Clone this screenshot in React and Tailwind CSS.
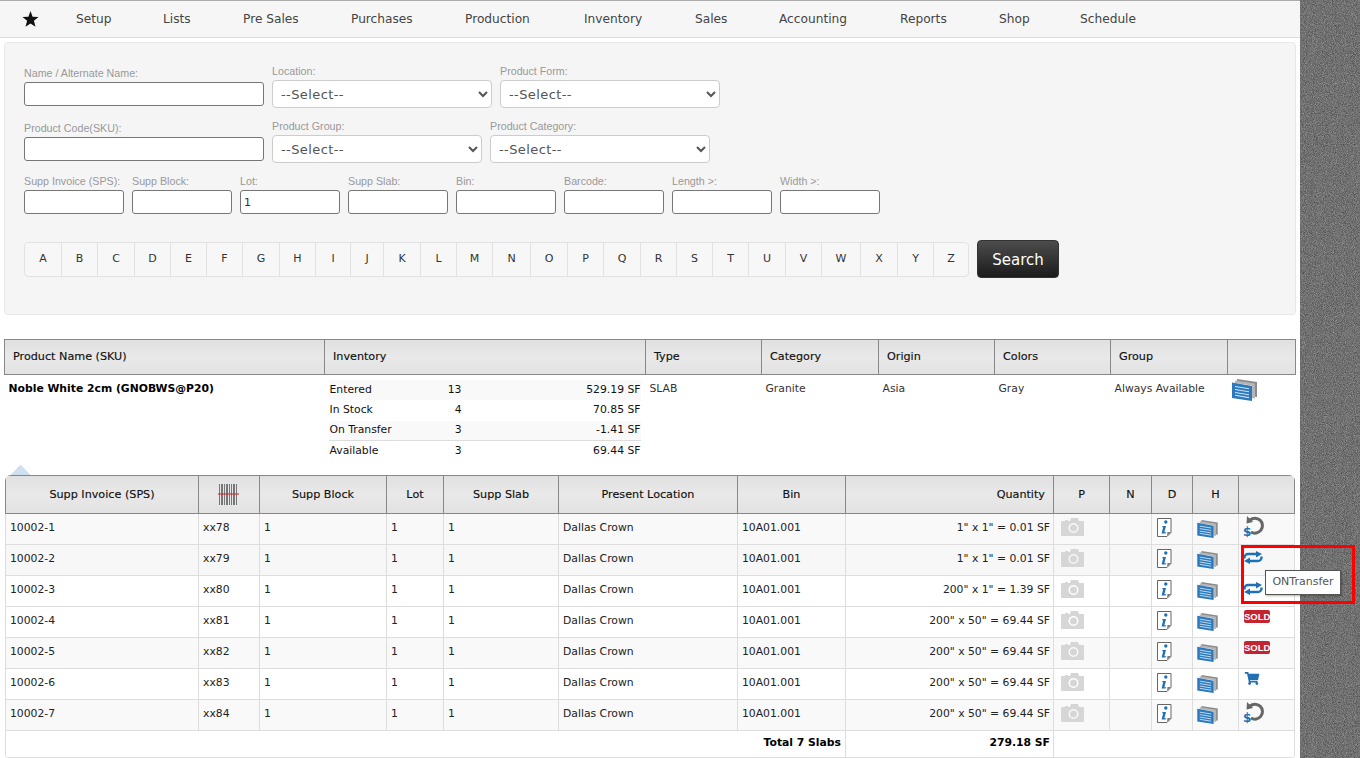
import React from "react";
import { FaShoppingCart } from "react-icons/fa";

const nav = [
  ["Setup", "w-[87px]"], ["Lists", "w-[80px]"], ["Pre Sales", "w-[108px]"], ["Purchases", "w-[114px]"], ["Production", "w-[119px]"],
  ["Inventory", "w-[111px]"], ["Sales", "w-[84px]"], ["Accounting", "w-[121px]"], ["Reports", "w-[99px]"], ["Shop", "w-[81px]"], ["Schedule", "w-[100px]"],
];
const letters = "ABCDEFGHIJKLMNOPQRSTUVWXYZ".split("");

function Label({ children, className = "" }) {
  return <div className={"h-[14px] leading-[14px] text-[10.7px] text-[#999] font-['Liberation_Sans',sans-serif] " + className}>{children}</div>;
}
function Field({ label, w = "w-[100px]", value = "" }) {
  return (
    <div className={w}>
      <Label>{label}</Label>
      <input readOnly value={value} className={"mt-[2px] block h-[24px] w-full rounded-[3px] border border-[#767676] bg-white px-[3px] text-[11px] text-[#333] font-['DejaVu_Sans',sans-serif]"} />
    </div>
  );
}
function Sel({ label, w }) {
  return (
    <div className={w}>
      <Label>{label}</Label>
      <select className="mt-[2px] block h-[28px] w-full rounded-[4px] border border-[#ccc] bg-white pl-[4px] text-[13px] tracking-[0.4px] text-[#555] font-['DejaVu_Sans',sans-serif]">
        <option>--Select--</option>
      </select>
    </div>
  );
}

const Star = () => (
  <svg width="17" height="16" viewBox="0 0 17 16" className="block">
    <path d="M8.500 0l2.100 5.700 5.900.300-4.600 3.800 1.600 6L8.500 12.500 3.500 15.800l1.600-6L.5 6l5.900-.3z" fill="#111" />
  </svg>
);
const Camera = () => (
  <svg width="23" height="18" viewBox="0 0 23 18" className="block">
    <path fillRule="evenodd" fill="#d6d6d6" d="M1 3h3V2h3v1h2l1-3h7l1 3h4a1 1 0 0 1 1 1v13a1 1 0 0 1-1 1H1a1 1 0 0 1-1-1V4a1 1 0 0 1 1-1zM12.500 5a5 5 0 1 0 0 10a5 5 0 0 0 0-10z" />
    <circle cx="12.500" cy="10" r="3.500" fill="#d6d6d6" />
  </svg>
);
const InfoDoc = () => (
  <svg width="15" height="19" viewBox="0 0 15 19" className="block">
    <path d="M.5.5h13.500v14l-4 4H.5z" fill="#fff" stroke="#666" />
    <path d="M10 18l4-4h-3.500z" fill="#777" />
    <circle cx="8.800" cy="4" r="1.700" fill="#1f70b5" />
    <path d="M5.500 8h3.500L7.300 14.200h2L8.500 15.500H4.600L6.200 9.200H5.200z" fill="#1f70b5" />
  </svg>
);
const Stack = ({ w = 21, h = 18 }) => (
  <svg width={w} height={h} viewBox="0 0 25 22" className="block">
    <path d="M5 0l20 3v15l-3-.500V5L5 2.500z" fill="#8b8b8b" />
    <path d="M3 1.500l20 3v15l-3-.500V6.500L3 4z" fill="#b5b5b5" />
    <path d="M0 3.500l20 3.500V22L0 19z" fill="#2a78bd" />
    <path d="M3 7.500l14 2.300M3 10.500l14 2.300M3 13.500l14 2.300M3 16.300l14 2.300" stroke="#cfe3f3" strokeWidth="1.100" fill="none" />
  </svg>
);
const Refund = () => (
  <svg width="20" height="23" viewBox="0 0 20 23" className="block overflow-visible">
    <path d="M7 4A7.500 7.500 0 1 1 8 16" fill="none" stroke="#666" strokeWidth="3" />
    <path d="M4 0L3.500 7.500 10 6z" fill="#666" />
    <text x="0" y="19.500" fontSize="12" fontWeight="700" fill="#1f70b5" fontFamily="'DejaVu Sans',sans-serif">$</text>
  </svg>
);
const Transfer = () => (
  <svg width="20" height="13" viewBox="0 0 20 13" className="block">
    <path d="M1.500 7.500V6.500a3.500 3.500 0 0 1 3.500-3.500H14" fill="none" stroke="#1f70b5" strokeWidth="2.400" />
    <path d="M13 0l6 3-6 3.500z" fill="#1f70b5" />
    <path d="M18.500 5.500V6.500a3.500 3.500 0 0 1-3.500 3.500H6" fill="none" stroke="#1f70b5" strokeWidth="2.400" />
    <path d="M7 6.500l-6 3.500 6 3z" fill="#1f70b5" />
  </svg>
);
const Sold = () => (
  <span className="ml-[1px] block h-[13px] w-[26px] rounded-[2px] bg-[#c4242f] text-center text-[9.500px] font-bold leading-[13px] text-white font-['Liberation_Sans',sans-serif]">SOLD</span>
);
const Cart = () => <FaShoppingCart className="ml-[1px] block h-[13px] w-[16px] text-[#1f70b5]" />;
const Barcode = () => (
  <svg width="22" height="21" viewBox="0 0 22 21" className="block">
    <path d="M1.500 0v21M3.500 0v21M4.500 0v21M6.500 0v21M8.500 0v21M9.500 0v21M11.500 0v21M13.500 0v21M15.500 0v21M16.500 0v21M18.500 0v21" stroke="#777" strokeWidth="1" />
    <path d="M0 10h21" stroke="#d0202a" strokeWidth="1.200" />
  </svg>
);

const hdr = "border border-[#888] bg-gradient-to-b from-[#e0e0e0] via-[#e9e9e9] to-[#e2e2e2] font-normal text-[#111] [-webkit-text-stroke:0.15px_#111]";

const rows = [
  ["10002-1", "xx78", `1" x 1" = 0.01 SF`, <Refund />, "bg-[#f9f9f9]", "pt-[2px]"],
  ["10002-2", "xx79", `1" x 1" = 0.01 SF`, <Transfer />, "bg-[#f7f7f7]", "pt-[6px]"],
  ["10002-3", "xx80", `200" x 1" = 1.39 SF`, <Transfer />, "bg-white", "pt-[6px]"],
  ["10002-4", "xx81", `200" x 50" = 69.44 SF`, <Sold />, "bg-white", "pt-[3px]"],
  ["10002-5", "xx82", `200" x 50" = 69.44 SF`, <Sold />, "bg-[#f9f9f9]", "pt-[3px]"],
  ["10002-6", "xx83", `200" x 50" = 69.44 SF`, <Cart />, "bg-white", "pt-[3px]"],
  ["10002-7", "xx84", `200" x 50" = 69.44 SF`, <Refund />, "bg-[#f9f9f9]", "pt-[2px]"],
];

const td = "border border-[#ddd] align-top pt-[7px] pl-[4px] leading-[13px] overflow-hidden whitespace-nowrap";
const th = hdr + " h-[38px] pt-[3px] text-center";
const inv = [
  ["Entered", "13", "529.19 SF", "bg-[#f9f9f9]"],
  ["In Stock", "4", "70.85 SF", "bg-white"],
  ["On Transfer", "3", "-1.41 SF", "bg-[#f9f9f9] border-b border-[#ddd]"],
  ["Available", "3", "69.44 SF", "bg-white"],
];

export default function App() {
  return (
    <div className="flex h-[758px] w-[1360px] overflow-hidden bg-white font-['DejaVu_Sans',sans-serif] text-[10.8px] text-[#111]">
      <main className="relative h-[758px] w-[1300px] shrink-0 bg-white">
        <nav className="flex h-[38px] items-center border-t border-b border-t-[#aaa] border-b-[#ddd] bg-[#f6f6f6] text-[12.2px] text-[#444]">
          <div className="flex w-[76px] shrink-0 pl-[22px]"><Star /></div>
          {nav.map(([t, w]) => <div key={t} className={w + " shrink-0"}>{t}</div>)}
        </nav>

        <section className="mx-[4px] mt-[4px] h-[273px] w-[1292px] rounded-[4px] border border-[#e8e8e8] bg-[#f5f5f5] pl-[19px] pt-[21px]">
          <div className="flex gap-[8px]">
            <div className="pt-[2px]"><Field label="Name / Alternate Name:" w="w-[240px]" /></div>
            <Sel label="Location:" w="w-[220px]" />
            <Sel label="Product Form:" w="w-[220px]" />
          </div>
          <div className="mt-[11px] flex gap-[8px]">
            <div className="pt-[2px]"><Field label="Product Code(SKU):" w="w-[240px]" /></div>
            <Sel label="Product Group:" w="w-[210px]" />
            <Sel label="Product Category:" w="w-[220px]" />
          </div>
          <div className="mt-[11px] flex gap-[8px]">
            <Field label="Supp Invoice (SPS):" />
            <Field label="Supp Block:" />
            <Field label="Lot:" value="1" />
            <Field label="Supp Slab:" />
            <Field label="Bin:" />
            <Field label="Barcode:" />
            <Field label="Length >:" />
            <Field label="Width >:" />
          </div>
          <div className="mt-[26px] flex items-center gap-[8px]">
            <div className="grid h-[35px] w-[945px] grid-cols-[36px_36px_37px_36px_36px_36px_37px_36px_35px_33px_37px_36px_36px_38px_37px_36px_37px_36px_36px_36px_37px_36px_39px_37px_36px_35px] rounded-[4px] border border-[#e2e2e2] bg-[#f7f7f7] text-[11px] text-[#333]">
              {letters.map((l, i) => (
                <div key={l} className={"flex items-center justify-center " + (i ? "border-l border-[#e2e2e2]" : "")}>{l}</div>
              ))}
            </div>
            <button className="h-[38px] w-[82px] rounded-[4px] border border-[#333] bg-gradient-to-b from-[#4d4d4d] to-[#1c1c1c] pt-[2px] text-[15px] text-white">Search</button>
          </div>
        </section>

        <table className="mx-[4px] mt-[24px] w-[1292px] table-fixed border-collapse text-[10.8px]">
          <colgroup>
            <col className="w-[320px]" /><col className="w-[321px]" /><col className="w-[116px]" /><col className="w-[117px]" /><col className="w-[116px]" /><col className="w-[116px]" /><col className="w-[117px]" /><col />
          </colgroup>
          <thead>
            <tr>
              {["Product Name (SKU)", "Inventory", "Type", "Category", "Origin", "Colors", "Group", ""].map((h, i) => (
                <th key={i} className={hdr + " h-[35px] pl-[8px] text-left text-[11.2px]"}>{h}</th>
              ))}
            </tr>
          </thead>
          <tbody>
            <tr className="h-[100px] align-top">
              <td className="pl-[4px] pt-[7px] text-[10.8px] font-bold leading-[14px] text-black">Noble White 2cm (GNOBWS@P20)</td>
              <td className="pl-[4px] pr-[5px] pt-[4.500px]">
                {inv.map(([a, b, c, bg]) => (
                  <div key={a} className={"flex h-[20.500px] items-center " + bg}>
                    <span className="w-[100px] pl-[1px]">{a}</span>
                    <span className="w-[33px] text-right">{b}</span>
                    <span className="flex-1 text-right">{c}</span>
                  </div>
                ))}
              </td>
              {["SLAB", "Granite", "Asia", "Gray", "Always Available"].map((t) => (
                <td key={t} className="pl-[4px] pt-[7px] leading-[14px] text-[#333]">{t}</td>
              ))}
              <td className="pl-[4px] pt-[4px]"><Stack w={25} h={22} /></td>
            </tr>
          </tbody>
        </table>

        <div className="relative ml-[5px] w-[1290px]">
          <svg width="20" height="10" viewBox="0 0 20 10" className="absolute -top-[10px] left-[6px]">
            <path d="M0 10L9.500 0 19 10z" fill="#cfe0f0" stroke="#b8cfe3" strokeWidth="0.500" />
          </svg>
          <div className="overflow-hidden rounded-t-[6px] rounded-b-[3px]">
            <table className="w-[1290px] table-fixed border-collapse text-[10.8px]">
              <colgroup>
                <col className="w-[193px]" /><col className="w-[61px]" /><col className="w-[127px]" /><col className="w-[57px]" /><col className="w-[115px]" /><col className="w-[179px]" /><col className="w-[108px]" /><col className="w-[208px]" /><col className="w-[56px]" /><col className="w-[42px]" /><col className="w-[41px]" /><col className="w-[46px]" /><col />
              </colgroup>
              <thead>
                <tr className="text-[11.2px]">
                  <th className={th}>Supp Invoice (SPS)</th>
                  <th className={th + " !pt-0"}><div className="flex justify-center"><Barcode /></div></th>
                  <th className={th}>Supp Block</th>
                  <th className={th}>Lot</th>
                  <th className={th}>Supp Slab</th>
                  <th className={th}>Present Location</th>
                  <th className={th}>Bin</th>
                  <th className={th + " pr-[8px] text-right"}>Quantity</th>
                  <th className={th}>P</th>
                  <th className={th}>N</th>
                  <th className={th}>D</th>
                  <th className={th}>H</th>
                  <th className={th}></th>
                </tr>
              </thead>
              <tbody className="text-[#222]">
                {rows.map(([inv2, code, qty, icon, bg, iconPad]) => (
                  <tr key={inv2} className={"h-[31px] " + bg}>
                    <td className={td}>{inv2}</td>
                    <td className={td}>{code}</td>
                    <td className={td}>1</td>
                    <td className={td}>1</td>
                    <td className={td}>1</td>
                    <td className={td}>Dallas Crown</td>
                    <td className={td}>10A01.001</td>
                    <td className={td + " pr-[3px] text-right"}>{qty}</td>
                    <td className="border border-[#ddd] pl-[7px] align-top pt-[4px]"><Camera /></td>
                    <td className="border border-[#ddd]"></td>
                    <td className="border border-[#ddd] pl-[5px] align-top pt-[4px]"><InfoDoc /></td>
                    <td className="border border-[#ddd] pl-[4px] align-top pt-[6px]"><Stack /></td>
                    <td className={"border border-[#ddd] pl-[4px] align-top " + iconPad}>{icon}</td>
                  </tr>
                ))}
                <tr className="h-[27px] bg-white font-bold text-black">
                  <td colSpan={7} className="border border-[#ddd] pr-[4px] text-right">Total 7 Slabs</td>
                  <td className="border border-[#ddd] pr-[3px] text-right">279.18 SF</td>
                  <td colSpan={5} className="border border-[#ddd]"></td>
                </tr>
              </tbody>
            </table>
          </div>
        </div>

        <div className="absolute left-[1241px] top-[545px] h-[59px] w-[114px] border-[3px] border-[#f00]"></div>
        <div className="absolute left-[1265px] top-[570px] flex h-[25px] w-[76px] items-center justify-center border border-[#555] bg-white text-[11px] text-[#555] shadow-[1px_1px_2px_rgba(0,0,0,0.3)]">ONTransfer</div>
      </main>
      <aside className="h-[758px] flex-1 bg-[#6b6b6b]">
        <svg width="60" height="758" className="block">
          <filter id="grain" colorInterpolationFilters="sRGB">
            <feTurbulence type="fractalNoise" baseFrequency="1.1" numOctaves="2" seed="4" />
            <feColorMatrix type="matrix" values="0.4 0 0 0 0.24 0.4 0 0 0 0.24 0.4 0 0 0 0.24 0 0 0 0 1" />
          </filter>
          <rect width="60" height="758" filter="url(#grain)" />
        </svg>
      </aside>
    </div>
  );
}
